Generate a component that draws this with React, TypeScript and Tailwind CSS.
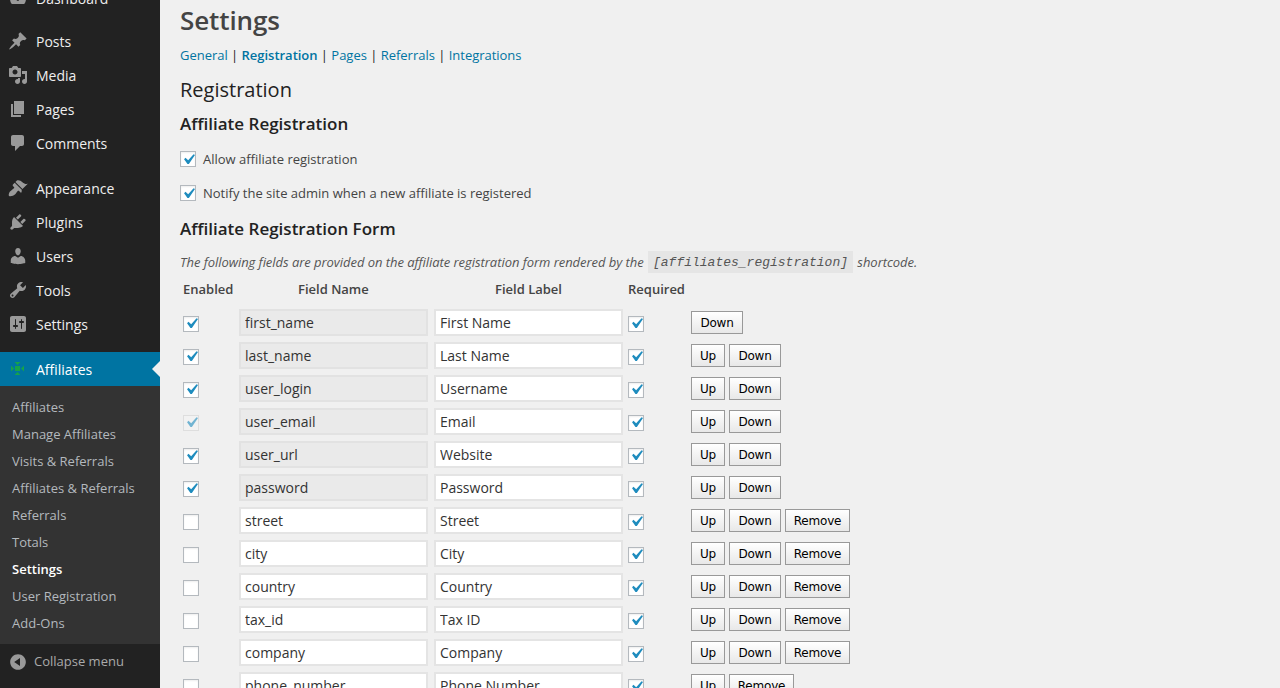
import React from "react";

const icons: Record<string, string> = {
  dashboard: "M3.76 16h12.48c1.1-1.37 1.76-3.11 1.76-5 0-4.42-3.58-8-8-8s-8 3.58-8 8c0 1.89.66 3.63 1.76 5zM10 4c.55 0 1 .45 1 1s-.45 1-1 1-1-.45-1-1 .45-1 1-1zM6 6c.55 0 1 .45 1 1s-.45 1-1 1-1-.45-1-1 .45-1 1-1zm8.01 1l-2.93 3.85c.18.36.2.79.04 1.19-.28.7-1.08 1.05-1.79.77-.7-.28-1.05-1.08-.77-1.79.16-.4.5-.68.88-.79z",
  post: "M10.44 3.02l1.82-1.82 6.36 6.35-1.83 1.82c-1.05-.68-2.48-.57-3.41.36l-.75.75c-.92.93-1.04 2.35-.35 3.41l-1.83 1.82-2.41-2.41-2.8 2.79c-.42.42-3.38 2.71-3.8 2.29s1.86-3.39 2.28-3.81l2.79-2.79L4.1 9.36l1.83-1.82c1.05.69 2.48.57 3.4-.36l.75-.75c.93-.92 1.05-2.35.36-3.41z",
  media: "M13 11V4c0-.55-.45-1-1-1h-1.67L9 1H5L3.67 3H2c-.55 0-1 .45-1 1v7c0 .55.45 1 1 1h10c.55 0 1-.45 1-1zM7 4.5c1.38 0 2.5 1.12 2.5 2.5S8.38 9.5 7 9.5 4.5 8.38 4.5 7 5.62 4.5 7 4.5zM14 6h5v10.5c0 1.38-1.12 2.5-2.5 2.5S14 17.88 14 16.5s1.12-2.5 2.5-2.5c.17 0 .34.02.5.05V9h-3V6zm-4 8.05V13h2v3.5c0 1.38-1.12 2.5-2.5 2.5S7 17.88 7 16.5 8.12 14 9.5 14c.17 0 .34.02.5.05z",
  page: "M6 15V2h10v13H6zm-1 1h8v2H3V5h2v11z",
  comments: "M5 2h9c1.1 0 2 .9 2 2v7c0 1.1-.9 2-2 2h-2l-5 5v-5H5c-1.1 0-2-.9-2-2V4c0-1.1.9-2 2-2z",
  appearance: "M14.48 11.06L7.41 3.99l1.5-1.5c.5-.56 2.3-.47 3.51.32 1.21.8 1.43 1.28 2.91 2.1 1.18.64 2.45 1.26 4.45.85zm-.71.71L6.7 4.7 4.93 6.47c-.39.39-.39 1.02 0 1.41l1.06 1.06c.39.39.39 1.03 0 1.42-.6.6-1.43 1.11-2.21 1.69-.35.26-.7.53-1.01.84C1.43 13.23.1 17.01 1.1 18s4.77-.33 6.11-1.67c.31-.31.58-.66.84-1.01.58-.78 1.09-1.61 1.69-2.21.39-.39 1.02-.39 1.41 0l1.06 1.06c.39.39 1.02.39 1.41 0z",
  plugins: "M13.11 4.36L9.87 7.6 8 5.73l3.24-3.24c.35-.34 1.05-.2 1.56.32.52.51.66 1.21.31 1.55zm-8 1.77l.91-1.12 9.01 9.01-1.19.84c-.71.71-2.63 1.16-3.82 1.16H6.14L4.9 17.26c-.59.59-1.54.59-2.12 0-.59-.58-.59-1.53 0-2.12l1.24-1.24v-3.88c0-1.13.4-3.19 1.09-3.89zm7.26 3.97l3.24-3.24c.34-.35 1.04-.21 1.55.31.52.51.66 1.21.31 1.55l-3.24 3.25z",
  users: "M10 9.25c-2.27 0-2.73-3.44-2.73-3.44C7 4.02 7.82 2 9.97 2c2.16 0 2.98 2.02 2.71 3.81 0 0-.41 3.44-2.68 3.44zm0 2.57L12.72 10c2.39 0 4.52 2.33 4.52 4.53v2.49s-3.65 1.13-7.24 1.13c-3.65 0-7.24-1.13-7.24-1.13v-2.49c0-2.25 1.94-4.48 4.47-4.48z",
  tools: "M16.68 9.77c-1.34 1.34-3.3 1.67-4.95.99l-5.41 6.52c-.99.99-2.59.99-3.58 0s-.99-2.59 0-3.57l6.52-5.42c-.68-1.65-.35-3.61.99-4.95 1.28-1.28 3.12-1.62 4.72-1.06l-2.89 2.89 2.82 2.82 2.86-2.87c.53 1.58.18 3.39-1.08 4.65zM3.81 16.21c.4.39 1.04.39 1.43 0 .4-.4.4-1.04 0-1.43-.39-.4-1.03-.4-1.43 0-.39.39-.39 1.03 0 1.43z",
  settings: "M18 16V4c0-1.1-.9-2-2-2H4c-1.1 0-2 .9-2 2v12c0 1.1.9 2 2 2h12c1.1 0 2-.9 2-2zM8 11h1c.55 0 1 .45 1 1s-.45 1-1 1H8v1.5c0 .28-.22.5-.5.5s-.5-.22-.5-.5V13H6c-.55 0-1-.45-1-1s.45-1 1-1h1V5.5c0-.28.22-.5.5-.5s.5.22.5.5V11zm5-2h-1c-.55 0-1-.45-1-1s.45-1 1-1h1V5.5c0-.28.22-.5.5-.5s.5.22.5.5V7h1c.55 0 1 .45 1 1s-.45 1-1 1h-1v5.5c0 .28-.22.5-.5.5s-.5-.22-.5-.5V9z",
};

function Dash({ name }: { name: string }) {
  return (
    <svg viewBox="0 0 20 20" className="w-5 h-5 shrink-0 fill-[#999]">
      <path d={icons[name]} />
    </svg>
  );
}

function MenuItem({ icon, label, className = "" }: { icon: string; label: string; className?: string }) {
  return (
    <div className={`h-[34px] flex items-center pl-2 gap-2 text-[14px] text-[#eee] ${className}`}>
      <Dash name={icon} />
      <span>{label}</span>
    </div>
  );
}

function Check({ off = false, disabled = false }: { off?: boolean; disabled?: boolean }) {
  return (
    <span
      className={`w-4 h-4 shrink-0 border flex items-center justify-center ${
        disabled ? "border-[#dedede] bg-[#f2f2f2]" : "border-[#b4b9be] bg-white shadow-[inset_0_1px_2px_rgba(0,0,0,0.07)]"
      }`}
    >
      {!off && (
        <svg viewBox="0 0 20 20" className={`w-[21px] h-[21px] shrink-0 ${disabled ? "fill-[#1e8cbe] opacity-60" : "fill-[#1e8cbe]"}`}>
          <path d="M14.83 4.89l1.34.94-5.81 8.38H9.02L5.78 9.67l1.34-1.25 2.57 2.4z" />
        </svg>
      )}
    </span>
  );
}

function Btn({ label }: { label: string }) {
  return (
    <button
      className={`h-[23px] border border-[#999] bg-gradient-to-b from-white to-[#e8e8e8] text-[12px] leading-none text-black font-['DejaVu_Sans',sans-serif] tracking-[-0.2px] ${
        label === "Up" ? "w-[34px]" : label === "Down" ? "w-[52px]" : "w-[65px]"
      }`}
    >
      {label}
    </button>
  );
}

const rows: { name: string; label: string; locked?: boolean; off?: boolean; dis?: boolean; btn: string[] }[] = [
  { name: "first_name", label: "First Name", locked: true, btn: ["Down"] },
  { name: "last_name", label: "Last Name", locked: true, btn: ["Up", "Down"] },
  { name: "user_login", label: "Username", locked: true, btn: ["Up", "Down"] },
  { name: "user_email", label: "Email", locked: true, dis: true, btn: ["Up", "Down"] },
  { name: "user_url", label: "Website", locked: true, btn: ["Up", "Down"] },
  { name: "password", label: "Password", locked: true, btn: ["Up", "Down"] },
  { name: "street", label: "Street", off: true, btn: ["Up", "Down", "Remove"] },
  { name: "city", label: "City", off: true, btn: ["Up", "Down", "Remove"] },
  { name: "country", label: "Country", off: true, btn: ["Up", "Down", "Remove"] },
  { name: "tax_id", label: "Tax ID", off: true, btn: ["Up", "Down", "Remove"] },
  { name: "company", label: "Company", off: true, btn: ["Up", "Down", "Remove"] },
  { name: "phone_number", label: "Phone Number", off: true, btn: ["Up", "Remove"] },
];

const inputCls = "w-[189px] h-[27px] shrink-0 border-2 px-1 text-[14px] text-[#333] outline-none";

export default function App() {
  return (
    <div className="flex h-[688px] overflow-hidden bg-[#f0f0f0] font-['Open_Sans',sans-serif]">
      <aside className="w-40 shrink-0 bg-[#222] -mt-[19px] h-[800px]">
        <MenuItem icon="dashboard" label="Dashboard" />
        <div className="h-[9px]" />
        <MenuItem icon="post" label="Posts" />
        <MenuItem icon="media" label="Media" />
        <MenuItem icon="page" label="Pages" />
        <MenuItem icon="comments" label="Comments" />
        <div className="h-[11px]" />
        <MenuItem icon="appearance" label="Appearance" />
        <MenuItem icon="plugins" label="Plugins" />
        <MenuItem icon="users" label="Users" />
        <MenuItem icon="tools" label="Tools" />
        <MenuItem icon="settings" label="Settings" />
        <div className="h-[11px]" />
        <div className="relative h-[34px] bg-[#0074a2] flex items-center pl-2 gap-2 text-[14px] text-white">
          <svg viewBox="0 0 20 20" className="w-5 h-5 shrink-0 fill-[#16a34a]">
            <path d="M7 7h5v5H7zM6.500 3h6l-3 3zM6.500 16h6l-3-3zM3 6.500v6l3-3zM16 6.500v6l-3-3z" />
          </svg>
          <span>Affiliates</span>
          <span className="absolute right-0 top-[9px] w-0 h-0 border-y-[8px] border-y-transparent border-r-[8px] border-r-[#f0f0f0]" />
        </div>
        <div className="bg-[#333] pt-2 pb-[7px] text-[13px] text-[#b4b9be]">
          {["Affiliates", "Manage Affiliates", "Visits & Referrals", "Affiliates & Referrals", "Referrals", "Totals", "Settings", "User Registration", "Add-Ons"].map((t) => (
            <div key={t} className={`h-[27px] flex items-center pl-3 ${t === "Settings" ? "font-semibold text-white" : ""}`}>
              {t}
            </div>
          ))}
        </div>
        <div className="h-[36px] flex items-center pl-2 gap-[6px] text-[13px] text-[#aaa]">
          <svg viewBox="0 0 20 20" className="w-5 h-5 shrink-0 fill-[#999]">
            <path d="M10 2.160c4.330 0 7.840 3.510 7.840 7.840s-3.510 7.840-7.840 7.840S2.160 14.330 2.160 10 5.710 2.160 10 2.160zm2 11.720V6.120L6.180 9.970z" />
          </svg>
          <span>Collapse menu</span>
        </div>
      </aside>

      <main className="flex-1 pl-5 text-[13px] text-[#444]">
        <h1 className="h-10 flex items-center text-[26px] font-semibold tracking-[-0.1px] text-[#444]">Settings</h1>
        <nav className="h-[30px] pt-[2px] flex items-center text-[13px] tracking-[-0.02px] text-[#222] whitespace-pre">
          <span className="text-[#0074a2]">General</span>
          <span> | </span>
          <span className="text-[#0074a2] font-semibold">Registration</span>
          <span> | </span>
          <span className="text-[#0074a2]">Pages</span>
          <span> | </span>
          <span className="text-[#0074a2]">Referrals</span>
          <span> | </span>
          <span className="text-[#0074a2]">Integrations</span>
        </nav>
        <h2 className="mt-1 h-8 flex items-center text-[20px] text-[#222]">Registration</h2>
        <h3 className="mt-px h-8 pt-px flex items-center text-[17px] font-semibold text-[#222]">Affiliate Registration</h3>
        <label className="mt-[3px] h-[34px] flex items-center gap-[7px]">
          <Check />
          <span className="pt-[2px]">Allow affiliate registration</span>
        </label>
        <label className="h-[34px] flex items-center gap-[7px]">
          <Check />
          <span className="pt-[2px]">Notify the site admin when a new affiliate is registered</span>
        </label>
        <h3 className="mt-[2px] h-8 pt-[2px] flex items-center text-[17px] font-semibold text-[#222]">Affiliate Registration Form</h3>
        <p className="h-9 flex items-center italic text-[#555] whitespace-pre tracking-[-0.047px]">
          <span className="pt-[2px]">The following fields are provided on the affiliate registration form rendered by the </span>
          <code className="ml-px h-[22px] px-[5px] pt-[2px] flex items-center bg-[#e5e5e5] font-['Liberation_Mono',monospace] text-[13px] tracking-normal italic text-[#555]">[affiliates_registration]</code>
          <span className="pl-px pt-[2px]"> shortcode.</span>
        </p>
        <div className="h-[18px] pt-[2px] flex items-center font-semibold text-[#444]">
          <span className="w-[118px] pl-[3px]">Enabled</span>
          <span className="w-[197px]">Field Name</span>
          <span className="w-[133px]">Field Label</span>
          <span>Required</span>
        </div>
        <div className="mt-[11px] flex flex-col gap-[6px]">
          {rows.map((r) => (
            <div key={r.name} className="h-[27px] flex items-center shrink-0">
              <span className="ml-[3px] mt-[2px] flex">
                <Check off={r.off} disabled={r.dis} />
              </span>
              <input
                readOnly
                value={r.name}
                className={`ml-10 ${inputCls} ${r.locked ? "bg-[#eaeaea] border-[#e2e2e2]" : "bg-white border-[#e4e4e4]"}`}
              />
              <input readOnly value={r.label} className={`ml-[6px] ${inputCls} bg-white border-[#e4e4e4]`} />
              <span className="ml-[5px] mt-[2px] flex">
                <Check />
              </span>
              <div className="ml-[47px] flex gap-1">
                {r.btn.map((b) => (
                  <Btn key={b} label={b} />
                ))}
              </div>
            </div>
          ))}
        </div>
      </main>
    </div>
  );
}
